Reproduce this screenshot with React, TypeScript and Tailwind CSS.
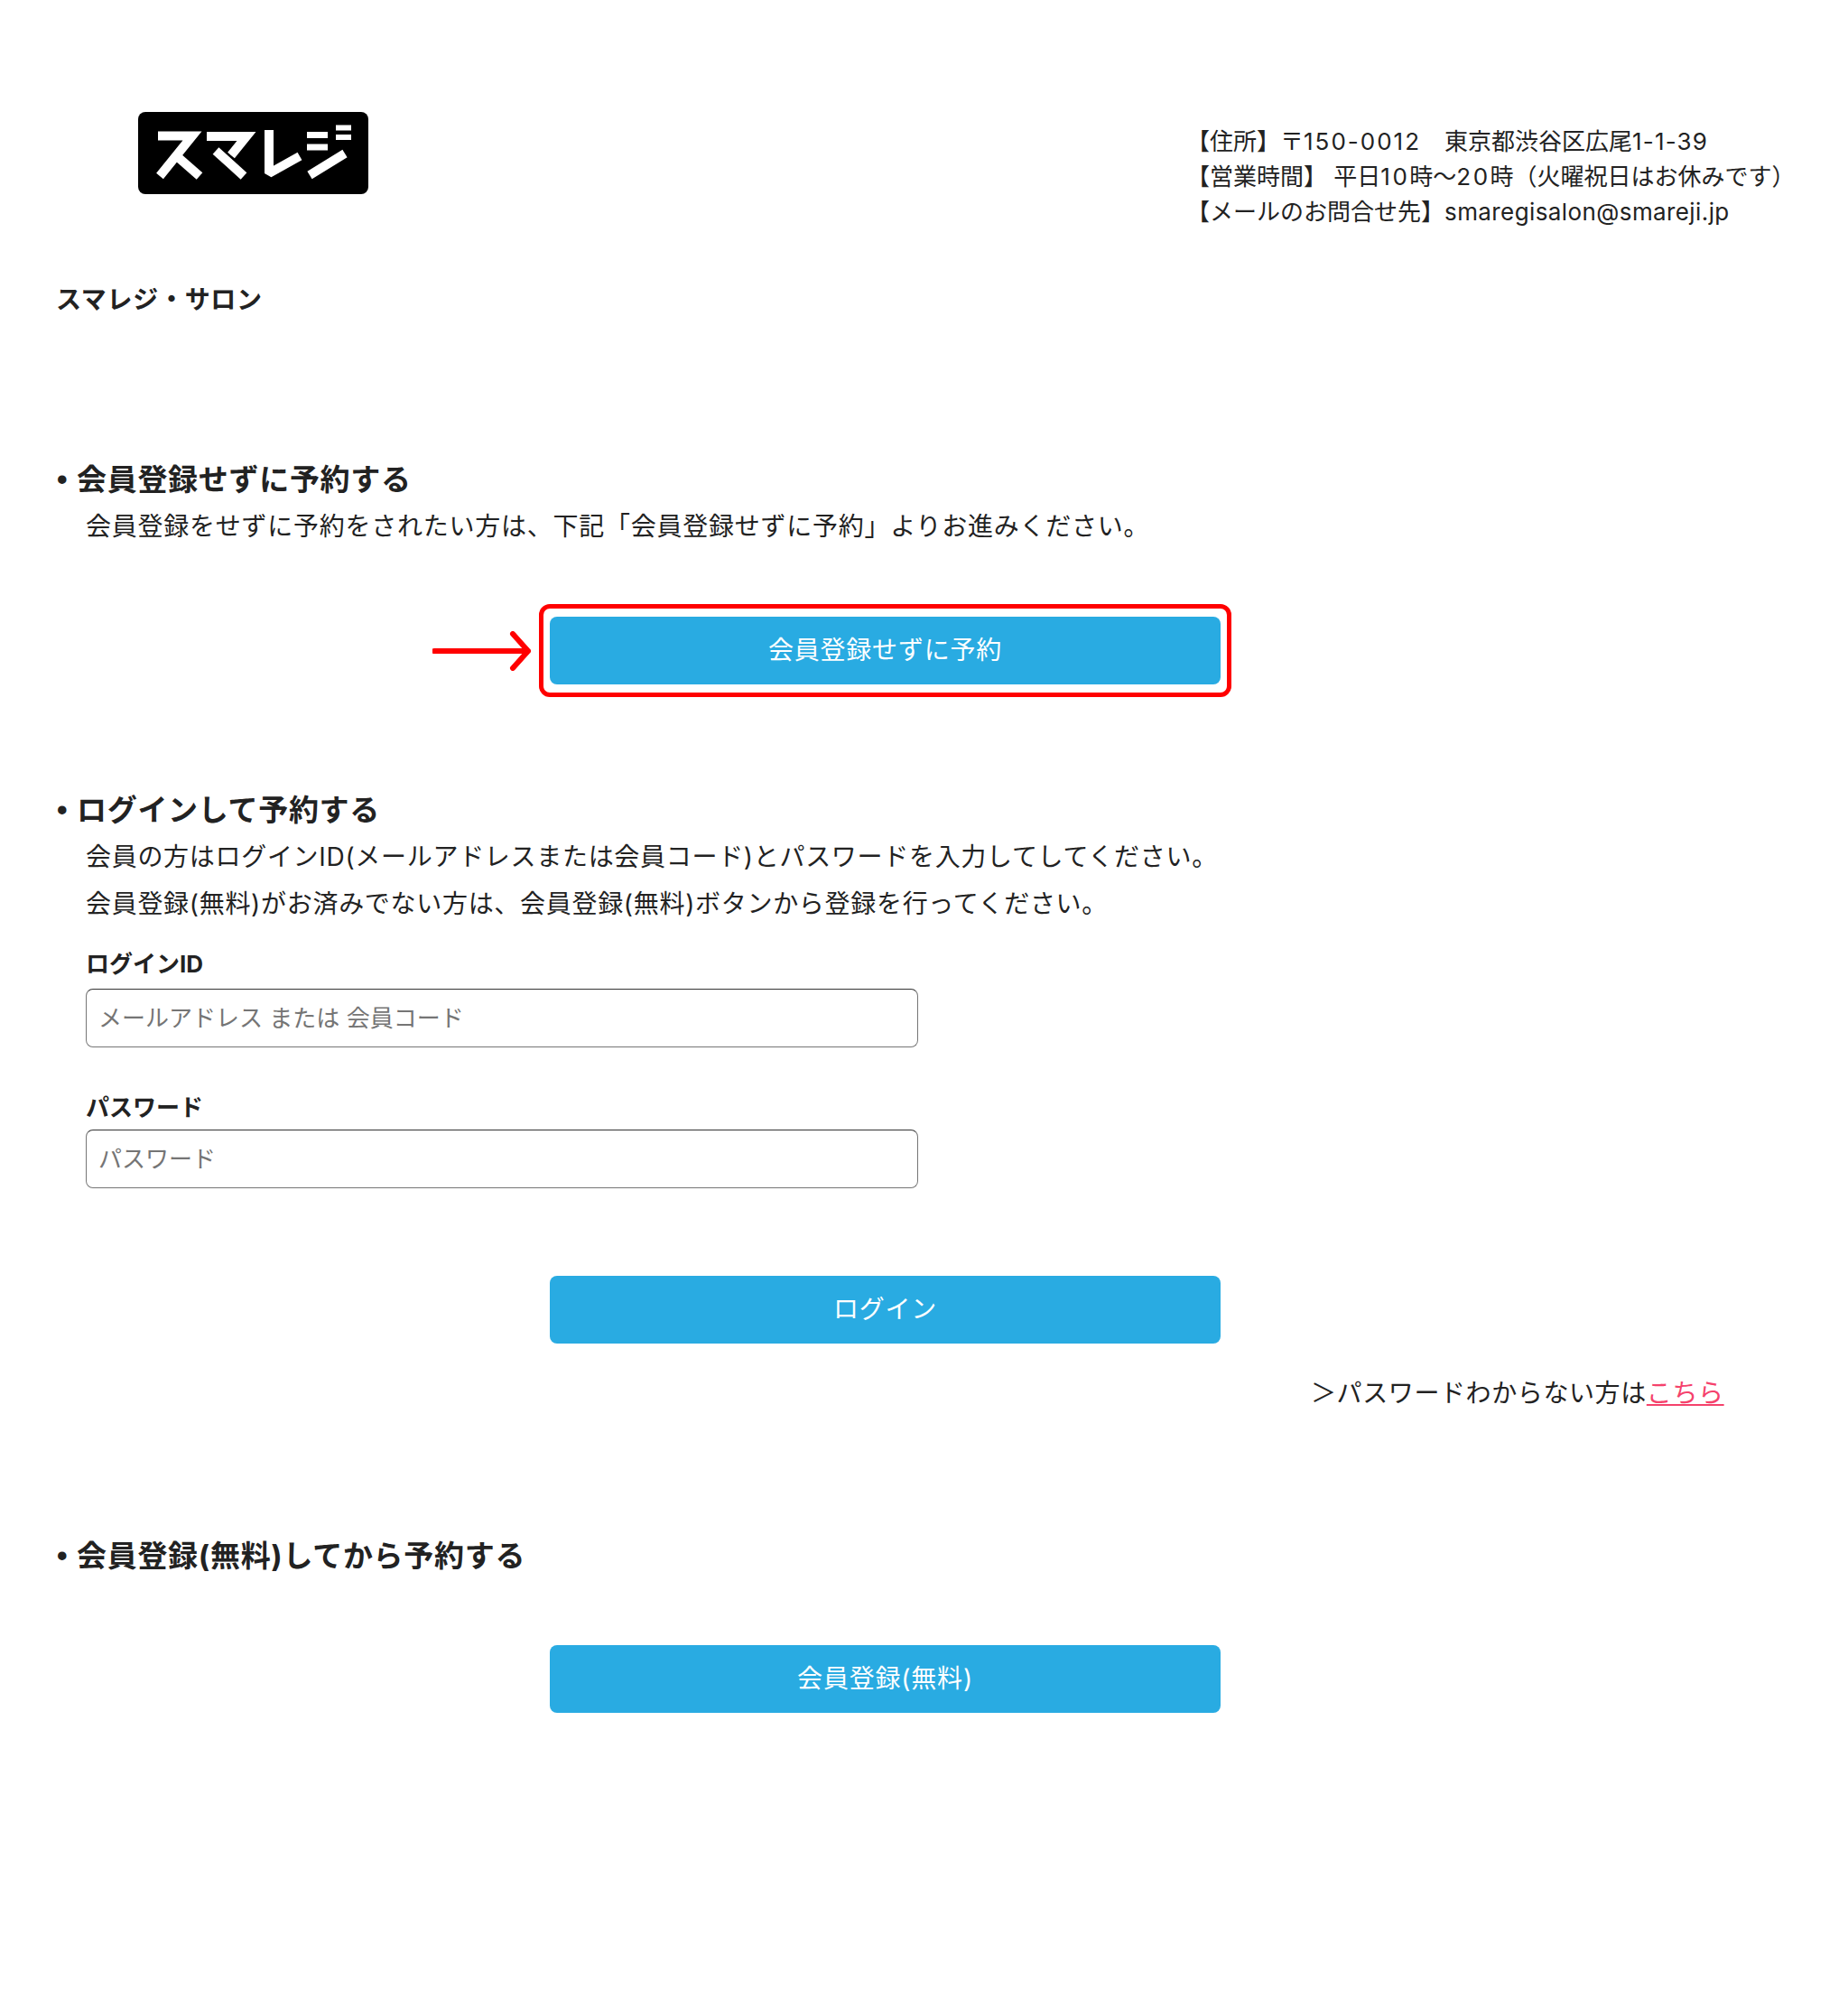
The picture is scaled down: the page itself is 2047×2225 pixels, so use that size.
function Logo() {
  return (
    <svg width="255" height="91" viewBox="0 0 255 91" className="block" role="img" aria-label="スマレジ">
      <rect width="255" height="91" rx="8" fill="#000" />
      <g fill="none" stroke="#fff" strokeWidth="10">
        <path d="M22 26.5H60L24 71" />
        <path d="M44 50L68 71" />
        <path d="M76 27H120L103 48" />
        <path d="M86 43L117 71" />
        <path d="M145 20V68L179 49" strokeLinejoin="bevel" />
        <path d="M187 25.5H210M187 39H210" strokeWidth="7" />
        <path d="M219 17.5H236M219 28H236" strokeWidth="6" />
        <path d="M190 70L229 46" />
      </g>
    </svg>
  );
}

function Arrow() {
  return (
    <svg width="110" height="44" viewBox="0 0 110 44" className="block shrink-0" aria-hidden="true">
      <path d="M2 22H106M89 3L106 22L89 41" fill="none" stroke="#ff0000" strokeWidth="6" strokeLinecap="round" strokeLinejoin="round" />
    </svg>
  );
}

function BlueButton({ label }: { label: string }) {
  return (
    <button className="block w-[743px] h-[75px] rounded-[8px] bg-[#29abe2] text-white text-[28px] leading-[75px] tracking-[0.8px] text-center">
      {label}
    </button>
  );
}

function Heading({ children, className }: { children: string; className: string }) {
  return (
    <h2 className={`text-[33px] leading-[44px] font-bold tracking-[0.7px] flex ${className}`}>
      <span className="w-[23px] pl-[1px] font-['Liberation_Sans']">•</span>
      {children}
    </h2>
  );
}

export default function App() {
  return (
    <div className="min-h-[2225px] bg-white text-[#222] pb-[329px] font-['Inter','Noto_Sans_CJK_JP',sans-serif]">
      <header className="flex justify-between pt-[124px] pl-[153px] pr-[20px]">
        <Logo />
        <div className="pt-[13px] text-[26px] leading-[39px] w-[713px] whitespace-nowrap">
          <p>
            【住所】〒<span className="tracking-[2px]">150-0012</span>　東京都渋谷区広尾
            <span className="tracking-[1.2px]">1-1-39</span>
          </p>
          <p>
            【営業時間】 平日<span className="tracking-[2.5px]">10</span>時〜<span className="tracking-[2.5px]">20</span>
            時（火曜祝日はお休みです）
          </p>
          <p>
            【メールのお問合せ先】<span className="tracking-[0.4px]">smaregisalon@smareji.jp</span>
          </p>
        </div>
      </header>

      <main className="pl-[62px]">
        <p className="mt-[58px] text-[28px] leading-[40px] font-bold tracking-[0.7px]">スマレジ・サロン</p>

        <Heading className="mt-[157px]">会員登録せずに予約する</Heading>
        <p className="ml-[33px] mt-[4px] text-[28px] leading-[52px] tracking-[0.75px]">
          会員登録をせずに予約をされたい方は、下記「会員登録せずに予約」よりお進みください。
        </p>

        <div className="flex items-center ml-[417px] mt-[60px]">
          <Arrow />
          <div className="rounded-[12px] border-[5px] border-[#ff0000] ml-[8px] px-[7px] py-[9px]">
            <BlueButton label="会員登録せずに予約" />
          </div>
        </div>

        <Heading className="mt-[103px]">ログインして予約する</Heading>
        <div className="ml-[33px] mt-[4px] text-[28px] leading-[52px] tracking-[0.7px]">
          <p>会員の方はログインID(メールアドレスまたは会員コード)とパスワードを入力してしてください。</p>
          <p>会員登録(無料)がお済みでない方は、会員登録(無料)ボタンから登録を行ってください。</p>
        </div>

        <div className="ml-[33px] mt-[21px] w-[922px]">
          <label className="block text-[26px] leading-[40px] font-bold">ログインID</label>
          <input
            placeholder="メールアドレス または 会員コード"
            className="block w-full h-[65px] mt-[7px] px-[13px] rounded-[8px] border border-[#767676] border-t-[#333] text-[26px] placeholder:text-[#757575]"
          />
          <label className="block mt-[47px] text-[26px] leading-[40px] font-bold">パスワード</label>
          <input
            placeholder="パスワード"
            className="block w-full h-[65px] mt-[4px] px-[13px] rounded-[8px] border border-[#767676] border-t-[#333] text-[26px] placeholder:text-[#757575]"
          />
        </div>

        <div className="ml-[547px] mt-[97px]">
          <BlueButton label="ログイン" />
        </div>

        <p className="ml-[1390px] mt-[35px] text-[28px] leading-[40px] tracking-[0.6px] whitespace-nowrap">
          ＞パスワードわからない方は<a href="#" className="text-[#f5426c] underline">こちら</a>
        </p>

        <Heading className="mt-[138px]">会員登録(無料)してから予約する</Heading>

        <div className="ml-[547px] mt-[77px]">
          <BlueButton label="会員登録(無料)" />
        </div>
      </main>
    </div>
  );
}
